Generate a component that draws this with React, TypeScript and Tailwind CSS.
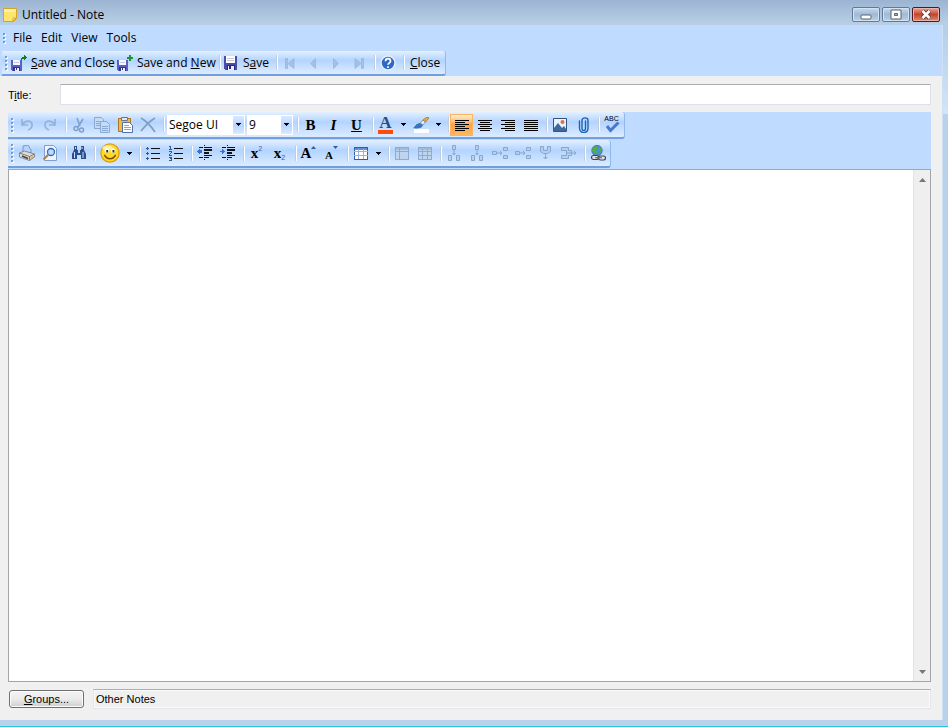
import type { ReactNode } from "react";

const UI = "font-['Open_Sans','Noto_Sans',sans-serif]";
const CLASSIC = "font-['Liberation_Sans',Arial,sans-serif]";
const BAR =
  "flex items-center rounded-r-[3px] border-b-2 border-r border-b-[#6f9fe0] border-r-[#8fb8ec] bg-linear-to-b from-[#e4f0ff] via-[#b3d4ff] via-40% to-[#ddecff]";

function Grip({ dots = 4 }: { dots?: number }) {
  return (
    <span className="flex w-[7px] shrink-0 flex-col gap-[2px] pl-[3px]">
      {Array.from({ length: dots }, (_, i) => (
        <span key={i} className="h-[2px] w-[2px] bg-[#6f9ddb] shadow-[1px_1px_0_#ffffff]" />
      ))}
    </span>
  );
}

function Sep() {
  return (
    <span className="flex w-[6px] shrink-0 justify-end">
      <span className="h-[15px] w-[2px] border-l border-[#c3cbd8] bg-white" />
    </span>
  );
}

function Tool({ label, children, wide = false, active = false }: { label: string; children: ReactNode; wide?: boolean; active?: boolean }) {
  const width = wide ? "w-[27px]" : "w-[23px]";
  const look = active ? "border border-[#ffb45c] bg-linear-to-b from-[#fff0d0] via-[#ff9f45] via-50% to-[#ffb962]" : "";
  return (
    <button type="button" aria-label={label} className={`flex h-[22px] shrink-0 items-center justify-center ${width} ${look}`}>
      {children}
    </button>
  );
}

function Icon({ children, size = 16, crisp = false }: { children: ReactNode; size?: number; crisp?: boolean }) {
  return (
    <svg width={size} height={size} viewBox="0 0 16 16" fill="none" shapeRendering={crisp ? "crispEdges" : "auto"} className="shrink-0" aria-hidden="true">
      {children}
    </svg>
  );
}

function Triangle() {
  return (
    <svg width="5" height="3" viewBox="0 0 5 3" shapeRendering="crispEdges" aria-hidden="true">
      <path d="M0 0h5v1h-5zM1 1h3v1h-3zM2 2h1v1h-1z" fill="#000" />
    </svg>
  );
}

function Drop({ label }: { label: string }) {
  return (
    <button type="button" aria-label={label} className="flex h-[22px] w-[12px] shrink-0 items-center justify-center">
      <Triangle />
    </button>
  );
}

function Combo({ label, value, options, width }: { label: string; value: string; options: string[]; width: string }) {
  return (
    <label className={`relative flex h-[20px] shrink-0 bg-white ${width}`}>
      <select aria-label={label} defaultValue={value} className="h-full w-full appearance-none bg-transparent pl-[2px] pr-3 text-[12px] leading-[18px] text-black outline-none">
        {options.map((o) => (
          <option key={o}>{o}</option>
        ))}
      </select>
      <span className="pointer-events-none absolute inset-y-px right-px flex w-[11px] items-center justify-center bg-linear-to-b from-[#d9e9ff] via-[#b5d5ff] to-[#d9eaff]">
        <Triangle />
      </span>
    </label>
  );
}

function Disk({ badge }: { badge?: "arrow" | "plus" }) {
  if (!badge) {
    return (
      <Icon crisp>
        <path d="M1 1h13v14h-12l-1-1z" fill="#4a4dac" />
        <path d="M3 1h9v7h-9z" fill="#fff" />
        <path d="M4 3h7v1h-7zM4 5h7v1h-7z" fill="#c4c8da" />
        <path d="M4 10h8v5h-8z" fill="#26277d" />
        <path d="M5 11h6v4h-6z" fill="#eef0f8" />
        <path d="M6 11h2v3h-2z" fill="#26277d" />
      </Icon>
    );
  }
  return (
    <Icon crisp>
      <path d="M0 5h11v11h-10l-1-1z" fill="#5b5fc4" />
      <path d="M2 5h7v5h-7z" fill="#f6f7ff" />
      <path d="M3 7h5v1h-5z" fill="#c5c9df" />
      <path d="M2 12h7v4h-7z" fill="#30338d" />
      <path d="M4 13h4v3h-4z" fill="#f0f1f9" />
      <path d="M5 13h1v2h-1z" fill="#30338d" />
      {badge === "arrow" ? (
        <path d="M10 5v-2h1v-1h2v-2h1v1h1v1h1v1h-1v1h-1v1h-1v-1h-2v1z" fill="#0b8411" />
      ) : (
        <path d="M12 0h2v2h2v2h-2v2h-2v-2h-2v-2h2z" fill="#229133" />
      )}
    </Icon>
  );
}

function Nav({ kind }: { kind: "first" | "prev" | "next" | "last" }) {
  const shapes = {
    first: "M3.500 3.500h2v10h-2zM12 3.500v10l-6-5z",
    prev: "M10.500 3.500v10l-5-5z",
    next: "M5.500 3.500v10l5-5z",
    last: "M10.500 3.500h2v10h-2zM4 3.500v10l6-5z",
  };
  return (
    <Icon>
      <path d={shapes[kind]} fill="#a4c0e4" stroke="#8fafd8" strokeWidth=".6" />
    </Icon>
  );
}

function Lines({ rows }: { rows: [number, number][] }) {
  return (
    <Icon crisp>
      {rows.map(([x, w], i) => (
        <rect key={i} x={x} y={3 + i * 2} width={w} height="1" fill="#000" />
      ))}
    </Icon>
  );
}

function ListIcon({ numbered = false }: { numbered?: boolean }) {
  return (
    <Icon crisp>
      <path d="M6 3h9v1h-9zM6 8h9v1h-9zM6 13h9v1h-9z" fill="#111" />
      {numbered ? (
        <path d="M1 1h2v3h1v1h-3v-1h1v-2h-1zM1 6h3v2h-1v1h-1v1h2v1h-3v-2h1v-1h1v-1h-2zM1 12h3v4h-3v-1h2v-1h-1v-1h1h-2z" fill="#315a9d" />
      ) : (
        <path d="M2 2h1v1h1v1h-1v1h-1v-1h-1v-1h1zM2 7h1v1h1v1h-1v1h-1v-1h-1v-1h1zM2 12h1v1h1v1h-1v1h-1v-1h-1v-1h1z" fill="#315a9d" />
      )}
    </Icon>
  );
}

function DentIcon({ inward = false }: { inward?: boolean }) {
  return (
    <Icon crisp>
      <path d="M2 2h4v1h-4zM7 2h8v1h-8zM7 4h8v2h-8zM7 7h5v2h-5zM7 10h8v1h-8zM2 12h4v1h-4zM7 12h5v1h-5z" fill="#111" />
      <path d="M7 0h1v1h-1zM7 14h1v1h-1z" fill="#111" />
      <path d={inward ? "M0 6h2v-2h1v1h1v1h1v1h-1v1h-1v1h-1v-2h-2z" : "M0 6h1v-1h1v-1h1v1h2v3h-2v1h-1v-1h-1v-1h-1z"} fill="#3b72c7" />
    </Icon>
  );
}

function TableIcon({ muted = false, grid = "M1 6.500h14M1 10.500h14M5.500 4v10M10.500 4v10" }: { muted?: boolean; grid?: string }) {
  const line = muted ? "#8fabcf" : "#355f9f";
  return (
    <Icon>
      <rect x="1.500" y="2.500" width="13" height="12" fill={muted ? "#bed4ef" : "#fff"} stroke={line} />
      <path d="M2 3h12v2h-12z" fill={muted ? "#9fbbdd" : "#5d8ed1"} />
      <path d={grid} stroke={muted ? "#8fabcf" : "#9ab2d7"} />
    </Icon>
  );
}

const CELL_EDITS: [string, ReactNode][] = [
  ["Insert column left", <path key="a" d="M6.500 .5h3v4h-3zM8 5v5M2.500 10.500h3v5h-3zM10.500 10.500h3v5h-3zM6.500 8l1.500 2 1.500-2" />],
  ["Insert column right", <path key="b" d="M6.500 .5h3v4h-3zM8 5v5M2.500 10.500h3v5h-3zM10.500 10.500h3v5h-3zM6.500 8l1.500 2 1.500-2" />],
  ["Insert row above", <path key="c" d="M.5 6.500h4v3h-4zM5 8h5M8 6l2 2-2 2M11.500 2.500h4v3h-4zM11.500 10.500h4v3h-4z" />],
  ["Insert row below", <path key="d" d="M.5 6.500h4v3h-4zM5 8h5M8 6l2 2-2 2M11.500 2.500h4v3h-4zM11.500 10.500h4v3h-4z" />],
  ["Delete column", <path key="e" d="M2.500 1.500h3v4h4v-4h3v5l-3 2h-4l-3-2zM7.500 8v6M5.500 12l2 2 2-2" />],
  ["Delete row", <path key="f" d="M.5 2.500h7v3h3v5h-3v3h-7v-3h5v-5h-5zM5 8h10M13 6l2 2-2 2" />],
];

function StyledLetter({ children, className }: { children: string; className: string }) {
  return <span className={`font-['Liberation_Serif',serif] text-[15px] leading-[16px] text-black ${className}`}>{children}</span>;
}

function TitleBar() {
  const btn = "flex h-[15px] w-[28px] items-center justify-center rounded-[2px] border bg-linear-to-b";
  const blue = "border-[#63799a] from-[#c8d9ec] via-[#9fb9d7] via-50% to-[#b8d1ea] shadow-[inset_0_0_0_1px_#d4e3f2]";
  return (
    <header className="flex h-[25px] shrink-0 items-center bg-linear-to-b from-[#9bb4d2] to-[#b9d0e7] pl-[2px] pr-2 pt-1">
      <svg width="16" height="16" viewBox="0 0 16 16" aria-hidden="true">
        <path d="M1.500 1.500h13v10l-3 3h-10z" fill="#ffe56e" stroke="#d7a526" />
        <path d="M2 2h12v3h-12z" fill="#fff2a4" />
        <path d="M11 14v-3h3z" fill="#fffad6" stroke="#d7a526" />
      </svg>
      <h1 className="ml-1 flex-1 text-[12px] leading-[16px] text-black">Untitled - Note</h1>
      <div className="flex gap-[2px]">
        <button type="button" aria-label="Minimize" className={`${btn} ${blue}`}>
          <svg width="12" height="13" viewBox="0 0 12 13"><rect x="1" y="7" width="10" height="4" rx="1" fill="#fff" stroke="#5a6470" /></svg>
        </button>
        <button type="button" aria-label="Maximize" className={`${btn} ${blue}`}>
          <svg width="12" height="11" viewBox="0 0 12 11"><path d="M1 1h10v9h-10z" fill="#fff" stroke="#5a6470" /><path d="M4.500 4.500h3v2h-3z" fill="#9db8d6" stroke="#5a6470" /></svg>
        </button>
        <button type="button" aria-label="Close window" className={`${btn} border-[#4f1720] from-[#e8a79b] via-[#c5432b] via-50% to-[#d98b72] shadow-[inset_0_0_0_1px_#e9b5aa]`}>
          <svg width="12" height="11" viewBox="0 0 12 11"><path d="M2.500 2l7 7M9.500 2l-7 7" stroke="#5a3b45" strokeWidth="4.500" /><path d="M2.500 2l7 7M9.500 2l-7 7" stroke="#fff" strokeWidth="2.500" /></svg>
        </button>
      </div>
    </header>
  );
}

function MainToolbar() {
  const text = "flex shrink-0 items-center text-[12px] leading-[16px] text-black";
  return (
    <div className={`${BAR} ml-[2px] h-[25px] w-fit`}>
      <Grip />
      <button type="button" className={`${text} w-[106px] gap-1 pl-[2px]`}>
        <Disk badge="arrow" />
        <span className="whitespace-nowrap"><u>S</u>ave and Close</span>
      </button>
      <button type="button" className={`${text} w-[100px] gap-1 pl-[2px]`}>
        <Disk badge="plus" />
        <span className="whitespace-nowrap">Save and <u>N</u>ew</span>
      </button>
      <Sep />
      <button type="button" className={`${text} w-[51px] gap-1 pl-[2px]`}>
        <Disk />
        <span>S<u>a</u>ve</span>
      </button>
      <Sep />
      <Tool label="First note"><Nav kind="first" /></Tool>
      <Tool label="Previous note"><Nav kind="prev" /></Tool>
      <Tool label="Next note"><Nav kind="next" /></Tool>
      <Tool label="Last note"><Nav kind="last" /></Tool>
      <Sep />
      <Tool label="Help">
        <Icon>
          <circle cx="8" cy="8" r="7" fill="#2f69c6" stroke="#e8eef9" strokeWidth="1.500" />
          <path d="M5.500 6.200c0-3.400 5-3.400 5 0 0 1.700-2.400 1.800-2.400 3.600M8 11.300v1.700" stroke="#fff" strokeWidth="1.700" />
        </Icon>
      </Tool>
      <Sep />
      <button type="button" className={`${text} px-[5px]`}><span><u>C</u>lose</span></button>
    </div>
  );
}

function FormatBar() {
  return (
    <div className={`${BAR} h-[27px] w-fit pr-px`}>
      <Grip dots={4} />
      <Tool label="Undo"><Icon><path d="M3 2v6h6M3.500 7.500c2-4 8.500-5 9.500-.5.500 3-1.500 5-4 6" stroke="#93b2dc" strokeWidth="1.700" /></Icon></Tool>
      <Tool label="Redo"><Icon><path d="M13 2v6h-6M12.500 7.500c-2-4-8.500-5-9.500-.5-.5 3 1.500 5 4 6" stroke="#93b2dc" strokeWidth="1.700" /></Icon></Tool>
      <Sep />
      <Tool label="Cut"><Icon><path d="M6 1l3 8M12 2l-5 8" stroke="#7e9fca" strokeWidth="1.500" /><circle cx="5" cy="11.500" r="2" stroke="#7e9fca" strokeWidth="1.500" /><circle cx="10.500" cy="13" r="2" stroke="#7e9fca" strokeWidth="1.500" /></Icon></Tool>
      <Tool label="Copy"><Icon><path d="M.5.500h7l2 2v9h-9z" fill="#c5daf5" stroke="#8aaad5" /><path d="M6.500 4.500h6l3 3v8h-9z" fill="#c5daf5" stroke="#8aaad5" /><path d="M8 9.500h6M8 11.500h6M8 13.500h6M2 4.500h4M2 6.500h4M2 8.500h4" stroke="#8aaad5" /></Icon></Tool>
      <Tool label="Paste"><Icon><path d="M1.500 1.500h12v13h-12z" fill="#f6b93d" stroke="#a8762a" /><path d="M4.500.500h6v3h-6z" fill="#e1e4ed" stroke="#69748e" /><path d="M5.500 5.500h7l3 3v7h-10z" fill="#fff" stroke="#4f70a6" /><path d="M7 8.500h5M7 10.500h7M7 12.500h7" stroke="#85a8d5" /></Icon></Tool>
      <Tool label="Delete"><Icon><path d="M1 1c5 3 10 8 14 14M15 1c-5 3-10 8-14 13" stroke="#819dc3" strokeWidth="1.700" /></Icon></Tool>
      <Sep />
      <div className="flex shrink-0 gap-[2px] pl-[2px]">
        <Combo label="Font" value="Segoe UI" options={["Segoe UI", "Arial", "Tahoma"]} width="w-[78px]" />
        <Combo label="Font size" value="9" options={["8", "9", "10", "12"]} width="w-[46px]" />
      </div>
      <Sep />
      <Tool label="Bold"><StyledLetter className="font-black">B</StyledLetter></Tool>
      <Tool label="Italic"><StyledLetter className="font-bold italic">I</StyledLetter></Tool>
      <Tool label="Underline"><StyledLetter className="font-bold underline">U</StyledLetter></Tool>
      <Sep />
      <button type="button" aria-label="Font color" className="flex h-[22px] w-[23px] shrink-0 flex-col items-center pt-[2px]">
        <span className="font-['Liberation_Serif',serif] text-[17px] font-bold leading-[14px] text-[#2b4b86]">A</span>
        <span className="h-1 w-[15px] bg-[#ff4d09]" />
      </button>
      <Drop label="Choose font color" />
      <Tool label="Highlight"><Icon><path d="M0 11c2-1 3-5 7-5l3 2c-1 4-6 4-10 3z" fill="#3974bf" /><path d="M7.500 6l2.500-3 2.500 2-2.500 3z" fill="#e8eef6" stroke="#7489a8" strokeWidth=".8" /><path d="M10 3l4-3 2 1-3.500 4z" fill="#e8ad38" stroke="#94743d" strokeWidth=".8" /><path d="M1 12h15v4h-15z" fill="#fff" /></Icon></Tool>
      <Drop label="Choose highlight color" />
      <Sep />
      <Tool label="Align left" active><Lines rows={[[1, 14], [1, 10], [1, 14], [1, 10], [1, 14], [1, 10]]} /></Tool>
      <Tool label="Align center"><Lines rows={[[1, 14], [3, 10], [1, 14], [3, 10], [1, 14], [3, 10]]} /></Tool>
      <Tool label="Align right"><Lines rows={[[1, 14], [5, 10], [1, 14], [5, 10], [1, 14], [5, 10]]} /></Tool>
      <Tool label="Justify"><Lines rows={[[1, 14], [1, 14], [1, 14], [1, 14], [1, 14], [1, 14]]} /></Tool>
      <Sep />
      <Tool label="Insert picture"><Icon><path d="M1.500 1.500h13v13h-13z" fill="#e9f3ff" stroke="#35517e" /><path d="M2 14v-3l4-5 4 5 2-2 2 3v2z" fill="#41679f" /><circle cx="10.500" cy="5" r="2" fill="#e76d36" /></Icon></Tool>
      <Tool label="Attach file"><Icon><path d="M10.500 4v7.500c0 2.500-3.500 2.500-3.500 0V3.500c0-3.500 6-3.500 6 0V11c0 6-8.500 6-8.500 0V4" stroke="#1d64b6" strokeWidth="1.400" strokeLinecap="round" /></Icon></Tool>
      <Sep />
      <button type="button" aria-label="Check spelling" className="flex h-[22px] w-[23px] shrink-0 flex-col items-center pt-px">
        <span className={`${CLASSIC} text-[7px] leading-[7px] text-black`}>ABC</span>
        <svg width="16" height="11" viewBox="0 0 16 11" fill="none" aria-hidden="true"><path d="M3 4l3.500 4.500 8-8" stroke="#4778cf" strokeWidth="3" /></svg>
      </button>
    </div>
  );
}

function InsertBar() {
  return (
    <div className={`${BAR} h-[28px] w-fit pr-px`}>
      <Grip dots={5} />
      <Tool label="Print"><Icon><path d="M4 7V1l5-1 3 5v3z" fill="#b5d4fb" stroke="#668bc0" strokeWidth=".8" /><path d="M.5 8l5-2 10 3v3l-5 3.500-10-3.500z" fill="#dcdad4" stroke="#777" strokeWidth=".8" /><path d="M.5 8l10 3.500 5-2.500M10.500 11.500v4" stroke="#666" strokeWidth=".8" /><path d="M3 11l6 2.500" stroke="#444" strokeWidth="1.500" /><path d="M11.500 13.500l3-2" stroke="#eea32b" strokeWidth="1.500" /></Icon></Tool>
      <Tool label="Print preview"><Icon><path d="M2.500.500h9l3 3v12h-12z" fill="#eef5ff" stroke="#7f9fd0" /><circle cx="9" cy="7" r="3.500" fill="#b7dafe" stroke="#376bb0" strokeWidth="1.300" /><path d="M6.500 9.500l-5 5" stroke="#b77d3b" strokeWidth="2" /></Icon></Tool>
      <Sep />
      <Tool label="Find"><Icon><path d="M3 1h3v4h1v3h2V5h1V1h3v4l2 4v5h-5v-4H6v4H1V9l2-4z" fill="#2c4f8c" /><path d="M3.500 7v6M12 7v6M4.500 2v2M11 2v2" stroke="#c7ddfb" /></Icon></Tool>
      <Sep />
      <Tool label="Insert emoticon" wide>
        <Icon size={20}>
          <circle cx="8" cy="8" r="7.300" fill="#ffdb20" stroke="#e39b13" />
          <ellipse cx="6" cy="4" rx="4" ry="2" fill="#fff39a" />
          <ellipse cx="5.500" cy="6" rx="1.800" ry="2" fill="#fff" />
          <ellipse cx="10.500" cy="6" rx="1.800" ry="2" fill="#fff" />
          <path d="M5 5.500h1.500v2H5zM10 5.500h1.500v2H10z" fill="#3a2a0b" />
          <path d="M3.500 9.500c2 4 7 4 9 0" stroke="#7d4810" strokeWidth="1.200" />
        </Icon>
      </Tool>
      <Drop label="Choose emoticon" />
      <Sep />
      <Tool label="Bulleted list"><ListIcon /></Tool>
      <Tool label="Numbered list"><ListIcon numbered /></Tool>
      <Sep />
      <Tool label="Decrease indent"><DentIcon /></Tool>
      <Tool label="Increase indent"><DentIcon inward /></Tool>
      <Sep />
      <button type="button" aria-label="Superscript" className="flex h-[22px] w-[23px] shrink-0 items-center justify-center">
        <StyledLetter className="font-bold">x</StyledLetter>
        <span className={`${CLASSIC} self-start pt-[3px] text-[7px] leading-[8px] text-[#2f5fb3]`}>2</span>
      </button>
      <button type="button" aria-label="Subscript" className="flex h-[22px] w-[23px] shrink-0 items-center justify-center">
        <StyledLetter className="font-bold">x</StyledLetter>
        <span className={`${CLASSIC} self-end pb-[2px] text-[7px] leading-[8px] text-[#2f5fb3]`}>2</span>
      </button>
      <Sep />
      <button type="button" aria-label="Grow font" className="flex h-[22px] w-[23px] shrink-0 items-center justify-center">
        <StyledLetter className="font-bold">A</StyledLetter>
        <svg width="5" height="14" viewBox="0 0 5 14" aria-hidden="true"><path d="M0 3h5L2.500 0z" fill="#315f9c" /></svg>
      </button>
      <button type="button" aria-label="Shrink font" className="flex h-[22px] w-[23px] shrink-0 items-center justify-center">
        <span className="pt-1 font-['Liberation_Serif',serif] text-[11px] font-bold leading-[12px] text-black">A</span>
        <svg width="5" height="14" viewBox="0 0 5 14" aria-hidden="true"><path d="M0 0h5L2.500 3z" fill="#315f9c" /></svg>
      </button>
      <Sep />
      <Tool label="Insert table"><TableIcon /></Tool>
      <Drop label="Table options" />
      <Sep />
      <Tool label="Table properties"><TableIcon muted grid="M1 6.500h14M5.500 3v11" /></Tool>
      <Tool label="Cell properties"><TableIcon muted /></Tool>
      <Sep />
      {CELL_EDITS.map(([label, shape]) => (
        <Tool key={label} label={label}>
          <Icon><g stroke="#89a6cc" fill="#b4cff1">{shape}</g></Icon>
        </Tool>
      ))}
      <Sep />
      <Tool label="Insert hyperlink">
        <Icon>
          <circle cx="7" cy="5.500" r="5.200" fill="#4b8ed7" stroke="#38699d" strokeWidth=".8" />
          <path d="M2.500 3l3.500-2.500 2 2-2 2 1 3-2 1.500-3-3zM9 1l3 3-1 4-2-2z" fill="#4fae45" />
          <rect x="1.500" y="10.500" width="7" height="4" rx="2" fill="#dfe4ec" stroke="#40454d" strokeWidth="1.200" />
          <rect x="8.500" y="11" width="7" height="4" rx="2" fill="#dfe4ec" stroke="#40454d" strokeWidth="1.200" />
          <path d="M5 12.700h7" stroke="#6b7078" strokeWidth="1.200" />
        </Icon>
      </Tool>
    </div>
  );
}

function Scrollbar() {
  const button = "flex h-[17px] items-center justify-center";
  return (
    <div className="flex w-[17px] shrink-0 flex-col justify-between border-l border-[#e3e3e3] bg-[#efefef] py-px">
      <button type="button" aria-label="Scroll up" className={button}>
        <svg width="7" height="4" viewBox="0 0 7 4"><path d="M0 4l3.500-4L7 4z" fill="#777" /></svg>
      </button>
      <button type="button" aria-label="Scroll down" className={button}>
        <svg width="7" height="4" viewBox="0 0 7 4"><path d="M0 0l3.500 4L7 0z" fill="#777" /></svg>
      </button>
    </div>
  );
}

export default function App() {
  return (
    <div className={`${UI} flex h-screen flex-col overflow-hidden border-b border-[#29c5e6] bg-[#b9d1ea]`}>
      <TitleBar />
      <div className="flex min-h-0 flex-1 pb-[6px]">
        <main className="flex min-w-0 flex-1 flex-col bg-[#f0f0f0]">
          <div className="h-[51px] shrink-0 bg-[#bfdbff]">
            <nav className="flex h-[26px] items-center text-[12px] leading-[16px] text-black">
              <Grip dots={3} />
              <div className="flex gap-[9px] pl-[6px]">
                <button type="button">File</button>
                <button type="button">Edit</button>
                <button type="button">View</button>
                <button type="button">Tools</button>
              </div>
            </nav>
            <MainToolbar />
          </div>
          <div className="flex min-h-0 flex-1 flex-col pb-[11px] pl-2 pr-[11px] pt-2">
            <div className={`${CLASSIC} flex shrink-0 items-center text-[11px] text-black`}>
              <label htmlFor="note-title" className="w-[52px] pt-px">T<u>i</u>tle:</label>
              <input id="note-title" className="h-[21px] min-w-0 flex-1 border border-[#dfe1e8] border-t-[#abadb3] bg-white px-1 outline-none" />
            </div>
            <div className="mt-[7px] flex shrink-0 flex-col gap-px bg-[#bfdbff] pb-px">
              <FormatBar />
              <InsertBar />
            </div>
            <div className="flex min-h-0 flex-1 border border-[#a3a5ab] bg-white">
              <textarea aria-label="Note text" className="min-w-0 flex-1 resize-none bg-white p-1 text-[12px] outline-none" />
              <Scrollbar />
            </div>
            <div className={`${CLASSIC} mt-[7px] flex h-5 shrink-0 items-center gap-[9px] text-[11px] text-black`}>
              <button type="button" className="ml-px h-[18px] w-[75px] rounded-[3px] border border-[#707070] bg-linear-to-b from-[#f4f4f4] via-[#ebebeb] via-50% to-[#cfcfcf] leading-[16px] shadow-[inset_0_0_0_1px_#fcfcfc]">
                <u>G</u>roups...
              </button>
              <input aria-label="Selected groups" readOnly value="Other Notes" className="h-5 min-w-0 flex-1 border border-[#e3e5ec] border-t-[#abadb3] bg-[#f0f0f0] px-[2px] shadow-[inset_0_0_0_1px_#fafafa] outline-none" />
            </div>
          </div>
        </main>
        <div className="w-[6px] shrink-0 border-l border-[#cfe0f2]">
          <div className="h-[89px] bg-linear-to-b from-[#b4cde8] to-[#d3e5f7]" />
        </div>
      </div>
    </div>
  );
}
